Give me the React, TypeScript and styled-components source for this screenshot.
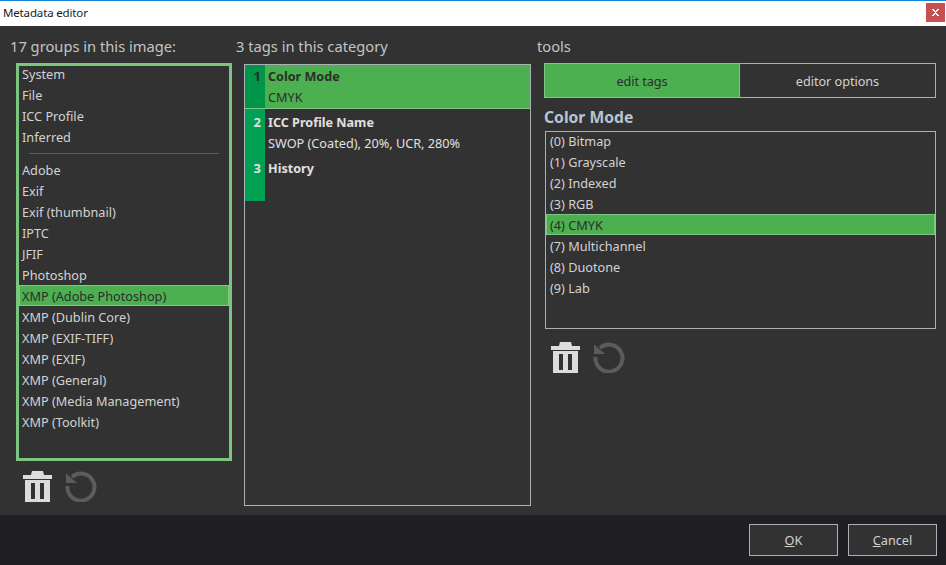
import React from "react";
import styled, { createGlobalStyle } from "styled-components";

const groupsTop = ["System", "File", "ICC Profile", "Inferred"];
const groupsBottom = [
  "Adobe",
  "Exif",
  "Exif (thumbnail)",
  "IPTC",
  "JFIF",
  "Photoshop",
  "XMP (Adobe Photoshop)",
  "XMP (Dublin Core)",
  "XMP (EXIF-TIFF)",
  "XMP (EXIF)",
  "XMP (General)",
  "XMP (Media Management)",
  "XMP (Toolkit)"
];
const tags = [
  { name: "Color Mode", value: "CMYK" },
  { name: "ICC Profile Name", value: "SWOP (Coated), 20%, UCR, 280%" },
  { name: "History", value: "" }
];
const modes = [
  "(0) Bitmap",
  "(1) Grayscale",
  "(2) Indexed",
  "(3) RGB",
  "(4) CMYK",
  "(7) Multichannel",
  "(8) Duotone",
  "(9) Lab"
];

const ActionIcons = () => (
  <>
    <svg width="29" height="32" viewBox="0 0 29 32">
      <path
        fill="#dcdcdc"
        fillRule="evenodd"
        d="M9 1h11l1 4h8v4H0V5h8zM2 10h25v22H2zM8 13v16h4V13zM17 13v16h4V13z"
      />
    </svg>
    <svg width="32" height="32" viewBox="0 0 32 32">
      <path
        fill="none"
        stroke="#5c5c5c"
        strokeWidth="4"
        d="M7 7A13.5 13.5 0 1 1 2.5 16"
      />
      <path fill="#5c5c5c" d="M1 3.5L1 13L12 13z" />
    </svg>
  </>
);

const App: React.FC = () => {
  return (
    <>
      <GlobalStyle />
      <Window>
        <TitleBar>
          <Title>Metadata editor</Title>
          <CloseButton>
            <svg width="7" height="7" viewBox="0 0 7 7">
              <path fill="#fff" d="M0 0h2v1h1v1h1V1h1V0h2v1H6v1H5v1H4v1h1v1h1v1h1v1H5V6H4V5H3v1H2v1H0V6h1V5h1V4h1V3H2V2H1V1H0z" />
            </svg>
          </CloseButton>
        </TitleBar>

        <Content>
          <GroupsColumn>
            <Heading>17 groups in this image:</Heading>
            <GroupsList>
              {groupsTop.map((g) => (
                <ListRow key={g}>{g}</ListRow>
              ))}
              <Separator />
              {groupsBottom.map((g) => (
                <ListRow key={g} $selected={g === "XMP (Adobe Photoshop)"}>
                  {g}
                </ListRow>
              ))}
            </GroupsList>
            <IconRow>
              <ActionIcons />
            </IconRow>
          </GroupsColumn>

          <TagsColumn>
            <Heading>3 tags in this category</Heading>
            <TagsPanel>
              {tags.map((t, i) => (
                <TagRow key={t.name} $selected={i === 0}>
                  <TagNumber $selected={i === 0}>{i + 1}</TagNumber>
                  <TagBody>
                    <TagName>{t.name}</TagName>
                    <TagValue>{t.value}</TagValue>
                  </TagBody>
                </TagRow>
              ))}
            </TagsPanel>
          </TagsColumn>

          <ToolsColumn>
            <Heading>tools</Heading>
            <ToolsBody>
              <Tabs>
                <Tab $active>edit tags</Tab>
                <Tab>editor options</Tab>
              </Tabs>
              <EditorTitle>Color Mode</EditorTitle>
              <ModeList>
                {modes.map((m) => (
                  <ModeRow key={m} $selected={m === "(4) CMYK"}>
                    {m}
                  </ModeRow>
                ))}
              </ModeList>
              <ToolsIconRow>
                <ActionIcons />
              </ToolsIconRow>
            </ToolsBody>
          </ToolsColumn>
        </Content>

        <Footer>
          <FooterButton>
            <u>O</u>K
          </FooterButton>
          <FooterButton>
            <u>C</u>ancel
          </FooterButton>
        </Footer>
      </Window>
    </>
  );
};

export default App;

const GlobalStyle = createGlobalStyle`
  html, body {
    margin: 0;
    padding: 0;
    background: #323232;
  }
  * {
    box-sizing: border-box;
  }
`;

const Window = styled.div`
  display: flex;
  flex-direction: column;
  width: 946px;
  height: 565px;
  overflow: hidden;
  font-family: "Noto Sans", "Open Sans", sans-serif;
  font-size: 12.7px;
  color: #d2d2d2;
`;

const TitleBar = styled.div`
  display: flex;
  justify-content: space-between;
  flex: none;
  height: 26px;
  padding: 2px 1px 0 3px;
  border-top: 1px solid #1883d7;
  background: #fff;
`;

const Title = styled.span`
  color: #1a1a1a;
  font-size: 11.5px;
  letter-spacing: -0.15px;
  line-height: 20px;
`;

const CloseButton = styled.div`
  display: flex;
  align-items: center;
  justify-content: center;
  width: 19px;
  height: 19px;
  background: #c75050;
`;

const Content = styled.div`
  display: flex;
  flex: 1;
  background: #323232;
`;

const Heading = styled.div`
  height: 37px;
  padding-top: 8px;
  font-size: 14.7px;
  line-height: 24px;
  color: #c4c4c4;
`;

const GroupsColumn = styled.div`
  flex: none;
  width: 236px;
  padding-left: 10px;
`;

const GroupsList = styled.div`
  display: flex;
  flex-direction: column;
  width: 216px;
  height: 398px;
  margin-left: 6px;
  border: 3px solid #7bc67e;
`;

const ListRow = styled.div<{ $selected?: boolean }>`
  flex: none;
  height: 21px;
  padding-left: 3px;
  line-height: 23px;
  background: ${(p) => (p.$selected ? "#4caf50" : "transparent")};
  color: ${(p) => (p.$selected ? "#2d2d2d" : "#d2d2d2")};
  ${(p) => (p.$selected ? "box-shadow: inset 0 0 0 1px #81c784;" : "")}

  &:first-child {
    margin-top: -3px;
  }
`;

const Separator = styled.div`
  flex: none;
  height: 1px;
  margin: 6px 10px 5px 10px;
  background: #5e5e5e;
`;

const IconRow = styled.div`
  display: flex;
  gap: 13px;
  margin-top: 9px;
  padding-left: 13px;
`;

const TagsColumn = styled.div`
  flex: none;
  width: 301px;
`;

const TagsPanel = styled.div`
  width: 287px;
  height: 442px;
  margin-left: 8px;
  margin-top: 1px;
  border: 1px solid #a9b0b8;
`;

const TagRow = styled.div<{ $selected?: boolean }>`
  display: flex;
  height: ${(p) => (p.$selected ? "44px" : "46px")};
  background: ${(p) => (p.$selected ? "#4caf50" : "transparent")};
  color: ${(p) => (p.$selected ? "#2d2d2d" : "#e0e0e0")};
  ${(p) => (p.$selected ? "border-bottom: 1px solid #81c784;" : "")}
  --row-top: ${(p) => (p.$selected ? "1px" : "3px")};
`;

const TagNumber = styled.div<{ $selected?: boolean }>`
  flex: none;
  width: 20px;
  padding: var(--row-top) 4px 0 0;
  text-align: right;
  font-size: 13px;
  font-weight: 700;
  line-height: 21px;
  background: ${(p) => (p.$selected ? "#00964a" : "#00a152")};
`;

const TagBody = styled.div`
  padding: var(--row-top) 0 0 3px;
`;

const TagName = styled.div`
  height: 21px;
  font-size: 12.6px;
  font-weight: 700;
  line-height: 21px;
`;

const TagValue = styled.div`
  line-height: 21px;
`;

const ToolsColumn = styled.div`
  flex: none;
  width: 409px;
`;

const ToolsBody = styled.div`
  padding-left: 7px;
`;

const Tabs = styled.div`
  display: flex;
  width: 392px;
  height: 35px;
  border: 1px solid #a9b0b8;
`;

const Tab = styled.div<{ $active?: boolean }>`
  flex: none;
  width: ${(p) => (p.$active ? "196px" : "195px")};
  margin: ${(p) => (p.$active ? "-1px 0 -1px -1px" : "0")};
  text-align: center;
  letter-spacing: -0.05px;
  line-height: ${(p) => (p.$active ? "36px" : "34px")};
  background: ${(p) => (p.$active ? "#4caf50" : "transparent")};
  color: ${(p) => (p.$active ? "#2d2d2d" : "#d2d2d2")};
  ${(p) => (p.$active ? "box-shadow: inset 0 0 0 1px #81c784;" : "")}
`;

const EditorTitle = styled.div`
  height: 33px;
  padding-top: 8px;
  font-size: 15.7px;
  font-weight: 700;
  line-height: 22px;
  color: #b8c4d0;
`;

const ModeList = styled.div`
  width: 391px;
  height: 198px;
  margin-left: 1px;
  border: 1px solid #a9b0b8;
`;

const ModeRow = styled(ListRow)`
  padding-left: 4px;

  &:first-child {
    margin-top: -2px;
  }
`;

const ToolsIconRow = styled(IconRow)`
  margin-top: 12px;
  padding-left: 7px;
`;

const Footer = styled.div`
  display: flex;
  justify-content: flex-end;
  gap: 10px;
  flex: none;
  height: 50px;
  padding: 9px 9px 0 0;
  background: #1e1e23;
`;

const FooterButton = styled.div`
  width: 89px;
  height: 32px;
  border: 1px solid #a9b0b8;
  background: #323232;
  text-align: center;
  line-height: 31px;
  color: #d2d2d2;
`;
